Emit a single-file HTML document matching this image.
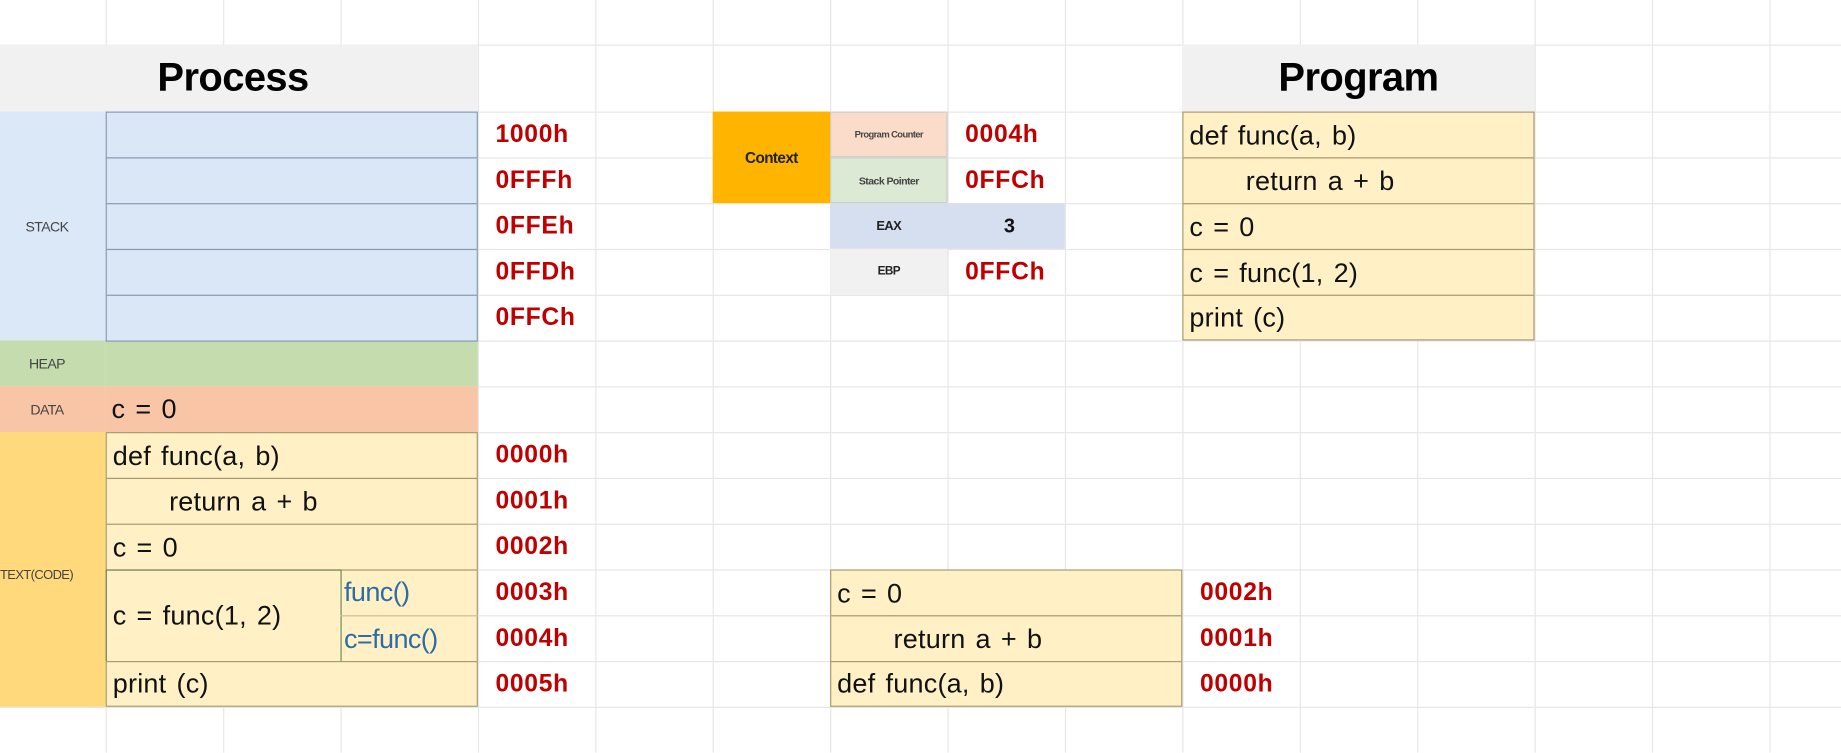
<!DOCTYPE html>
<html><head><meta charset="utf-8"><style>
html,body{margin:0;padding:0;background:#fff;overflow:hidden;width:1841px;height:753px}
#w{position:absolute;left:0;top:0;width:1568px;height:641px;transform:scale(1.17411);transform-origin:0 0;font-family:"Liberation Sans",sans-serif}
.a{position:absolute;box-sizing:border-box}
.vl{position:absolute;top:0;width:1px;height:641px;background:#e6e6e6}
.hl{position:absolute;left:0;height:1px;width:1568px;background:#e6e6e6}
.t{font-size:23px;color:#111;letter-spacing:0.2px;word-spacing:2px;display:flex;align-items:center;padding-left:5px;white-space:nowrap}
.r{font-size:21px;font-weight:bold;color:#c00000;letter-spacing:0.6px;display:flex;align-items:center}
.lab{font-size:12px;color:#444;display:flex;align-items:center;justify-content:center;letter-spacing:-0.5px}
.st{background:#d9e7f7;border:1.5px solid #8a9bb0}
.y{background:#fff0c6;border:1.5px solid #a89a70}
</style></head><body><div id="w">
<div class="vl" style="left:90px"></div><div class="vl" style="left:190px"></div><div class="vl" style="left:290px"></div><div class="vl" style="left:407px"></div><div class="vl" style="left:507px"></div><div class="vl" style="left:607px"></div><div class="vl" style="left:707px"></div><div class="vl" style="left:807px"></div><div class="vl" style="left:907px"></div><div class="vl" style="left:1007px"></div><div class="vl" style="left:1107px"></div><div class="vl" style="left:1207px"></div><div class="vl" style="left:1307px"></div><div class="vl" style="left:1407px"></div><div class="vl" style="left:1507px"></div>
<div class="hl" style="top:38px"></div><div class="hl" style="top:95px"></div><div class="hl" style="top:134px"></div><div class="hl" style="top:173px"></div><div class="hl" style="top:212px"></div><div class="hl" style="top:251px"></div><div class="hl" style="top:290px"></div><div class="hl" style="top:329px"></div><div class="hl" style="top:368px"></div><div class="hl" style="top:407px"></div><div class="hl" style="top:446px"></div><div class="hl" style="top:485px"></div><div class="hl" style="top:524px"></div><div class="hl" style="top:563px"></div><div class="hl" style="top:602px"></div>

<div class="a" style="left:0;top:38px;width:407px;height:57px;background:#f1f1f1;font-size:34px;font-weight:bold;display:flex;align-items:center;justify-content:center;letter-spacing:-0.5px;padding-right:10px">Process</div>
<div class="a" style="left:1007px;top:38px;width:300px;height:57px;background:#f1f1f1;font-size:34px;font-weight:bold;display:flex;align-items:center;justify-content:center;letter-spacing:-0.5px">Program</div>

<div class="a lab" style="left:0;top:95px;width:90px;height:195px;background:#dae8f8;padding-right:10px">STACK</div>
<div class="a st" style="left:90px;top:95px;width:317px;height:40px"></div>
<div class="a st" style="left:90px;top:134px;width:317px;height:40px"></div>
<div class="a st" style="left:90px;top:173px;width:317px;height:40px"></div>
<div class="a st" style="left:90px;top:212px;width:317px;height:40px"></div>
<div class="a st" style="left:90px;top:251px;width:317px;height:40px"></div>
<div class="a lab" style="left:0;top:290px;width:90px;height:39px;background:#c4dcae;padding-right:10px">HEAP</div>
<div class="a" style="left:90px;top:290px;width:317px;height:39px;background:#c4dcae;border-top:1.5px solid #8a9bb0"></div>
<div class="a lab" style="left:0;top:329px;width:90px;height:39px;background:#f8c6a6;padding-right:10px">DATA</div>
<div class="a t" style="left:90px;top:329px;width:317px;height:39px;background:#f8c6a6">c = 0</div>
<div class="a lab" style="left:0;top:368px;width:90px;height:234px;background:#ffd97c;font-size:11px;justify-content:flex-start;padding-left:0;padding-top:10px;overflow:hidden;white-space:nowrap">TEXT(CODE)</div>
<div class="a y t" style="left:90px;top:368px;width:317px;height:40px">def func(a, b)</div>
<div class="a y t" style="left:90px;top:407px;width:317px;height:40px;padding-left:53px">return a + b</div>
<div class="a y t" style="left:90px;top:446px;width:317px;height:40px">c = 0</div>
<div class="a y" style="left:90px;top:485px;width:317px;height:79px"></div>
<div class="a t" style="left:90px;top:485px;width:201px;height:79px;border:1.5px solid #6b8a5a">c = func(1, 2)</div>
<div class="a t" style="left:290px;top:485px;width:117px;height:39px;color:#2e6da4;padding-left:3px;letter-spacing:-0.5px">func()</div>
<div class="a t" style="left:290px;top:524px;width:117px;height:39px;color:#2e6da4;padding-left:3px;letter-spacing:-0.5px;border-top:1px solid #c8bc98">c=func()</div>
<div class="a y t" style="left:90px;top:563px;width:317px;height:39px">print (c)</div>

<div class="a r" style="left:422px;top:95px;height:39px">1000h</div>
<div class="a r" style="left:422px;top:134px;height:39px">0FFFh</div>
<div class="a r" style="left:422px;top:173px;height:39px">0FFEh</div>
<div class="a r" style="left:422px;top:212px;height:39px">0FFDh</div>
<div class="a r" style="left:422px;top:251px;height:39px">0FFCh</div>
<div class="a r" style="left:422px;top:368px;height:39px">0000h</div>
<div class="a r" style="left:422px;top:407px;height:39px">0001h</div>
<div class="a r" style="left:422px;top:446px;height:39px">0002h</div>
<div class="a r" style="left:422px;top:485px;height:39px">0003h</div>
<div class="a r" style="left:422px;top:524px;height:39px">0004h</div>
<div class="a r" style="left:422px;top:563px;height:39px">0005h</div>

<div class="a lab" style="left:607px;top:95px;width:100px;height:78px;background:#ffb400;font-weight:bold;color:#222;font-size:13px">Context</div>
<div class="a lab" style="left:707px;top:95px;width:100px;height:39px;background:#fbdccb;border:1px solid #ccc;font-size:8px;font-weight:bold">Program Counter</div>
<div class="a lab" style="left:707px;top:134px;width:100px;height:39px;background:#dbe9d5;border:1px solid #ccc;font-size:9px;font-weight:bold">Stack Pointer</div>
<div class="a lab" style="left:707px;top:173px;width:200px;height:39px;background:#d6dff0"></div>
<div class="a lab" style="left:707px;top:173px;width:100px;height:39px;font-size:11px;font-weight:bold;color:#222">EAX</div>
<div class="a lab" style="left:807px;top:173px;width:100px;height:39px;font-size:17px;font-weight:bold;color:#111;padding-left:0;justify-content:flex-end;padding-right:43px">3</div>
<div class="a lab" style="left:707px;top:212px;width:100px;height:39px;background:#f1f1f1;font-size:10px;font-weight:bold;color:#222">EBP</div>
<div class="a r" style="left:822px;top:95px;height:39px">0004h</div>
<div class="a r" style="left:822px;top:134px;height:39px">0FFCh</div>
<div class="a r" style="left:822px;top:212px;height:39px">0FFCh</div>

<div class="a y t" style="left:1007px;top:95px;width:300px;height:40px">def func(a, b)</div>
<div class="a y t" style="left:1007px;top:134px;width:300px;height:40px;padding-left:53px">return a + b</div>
<div class="a y t" style="left:1007px;top:173px;width:300px;height:40px">c = 0</div>
<div class="a y t" style="left:1007px;top:212px;width:300px;height:40px">c = func(1, 2)</div>
<div class="a y t" style="left:1007px;top:251px;width:300px;height:39px">print (c)</div>

<div class="a y t" style="left:707px;top:485px;width:300px;height:40px">c = 0</div>
<div class="a y t" style="left:707px;top:524px;width:300px;height:40px;padding-left:53px">return a + b</div>
<div class="a y t" style="left:707px;top:563px;width:300px;height:39px">def func(a, b)</div>
<div class="a r" style="left:1022px;top:485px;height:39px">0002h</div>
<div class="a r" style="left:1022px;top:524px;height:39px">0001h</div>
<div class="a r" style="left:1022px;top:563px;height:39px">0000h</div>
</div></body></html>
